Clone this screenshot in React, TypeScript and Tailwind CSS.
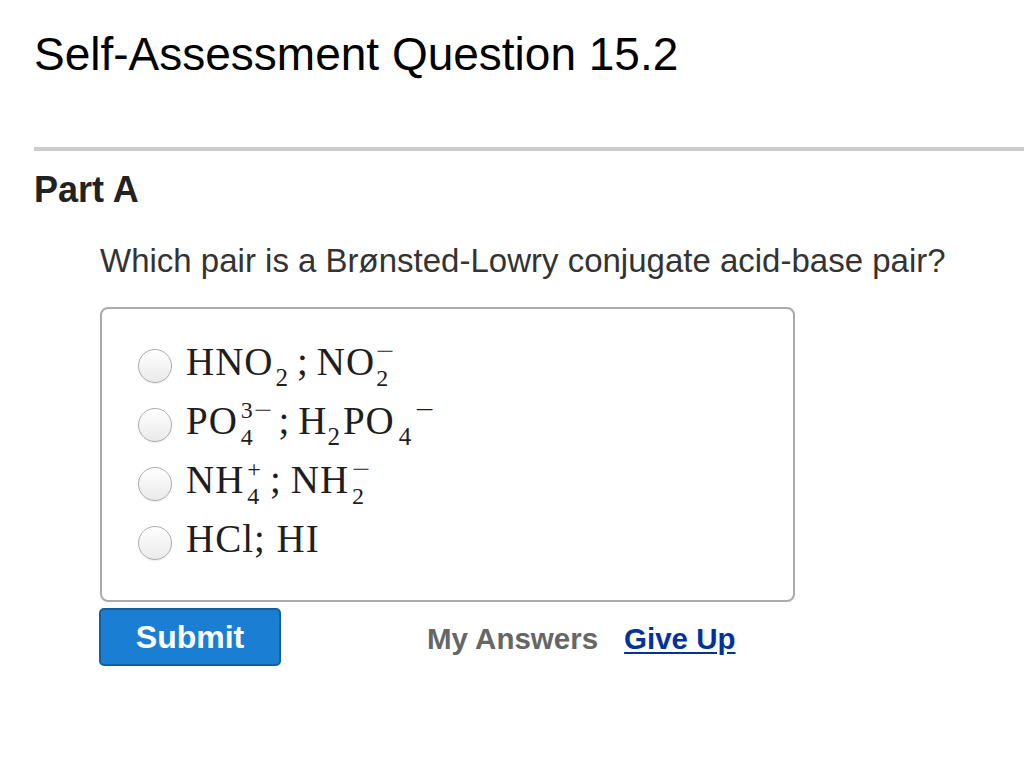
import React from "react";

const Sub = ({ children, className = "" }: { children: React.ReactNode; className?: string }) => (
  <span className={"relative top-[11px] text-[25px] leading-none " + className}>{children}</span>
);

const Sup = ({ children, className = "" }: { children: React.ReactNode; className?: string }) => (
  <span className={"relative -top-[16px] text-[25px] leading-none " + className}>{children}</span>
);

const Minus = () => <span className="inline-block origin-left scale-x-[1.35] mr-[4px]">−</span>;

const Stack = ({ sup, sub, className = "" }: { sup: React.ReactNode; sub: React.ReactNode; className?: string }) => (
  <span className={"relative -top-[16px] inline-flex flex-col items-start text-[24px] leading-[27px] " + className}>
    <span>{sup}</span>
    <span>{sub}</span>
  </span>
);

const Radio = () => (
  <span className="w-[34px] h-[34px] shrink-0 rounded-full border border-[#adadad] bg-linear-to-b from-white to-[#eaeaea] shadow-[0_1px_1px_rgba(0,0,0,0.08)]" />
);

const Row = ({ children }: { children: React.ReactNode }) => (
  <div className="flex items-center h-[59px]">
    <Radio />
    <div
      className="ml-[14px] mb-[8px] h-[38px] text-[39px] leading-[38px] tracking-[1px] text-[#1e1e1e] whitespace-nowrap"
      style={{ fontFamily: '"Liberation Serif", "Times New Roman", serif' }}
    >
      {children}
    </div>
  </div>
);

export default function App() {
  return (
    <div className="w-full min-h-[773px] bg-white" style={{ fontFamily: '"Liberation Sans", Arial, Helvetica, sans-serif' }}>
      <div className="pt-[31px] pl-[34px] text-[46px] leading-[46px] text-black">Self-Assessment Question 15.2</div>
      <div className="mt-[70px] ml-[34px] h-[4px] bg-[#cccccc]" />
      <div className="mt-[21px] pl-[34px] text-[36px] leading-[36px] font-bold text-[#222]">Part A</div>
      <div className="mt-[36px] pl-[100px] text-[33px] leading-[33px] text-[#333]">
        Which pair is a Brønsted-Lowry conjugate acid-base pair?
      </div>
      <div className="mt-[30px] ml-[100px] w-[695px] h-[295px] border-2 border-[#aaaaaa] rounded-[8px] pt-[27px] pl-[36px]">
        <Row>
          HNO<Sub className="ml-[2px]">2</Sub>
          <span className="ml-[8px]">;</span>
          <span className="ml-[8px]">NO</span>
          <Stack sup={<Minus />} sub="2" className="ml-[1px]" />
        </Row>
        <Row>
          PO
          <Stack sup={<>3<Minus /></>} sub="4" className="ml-[3px]" />
          <span className="ml-[6px]">;</span>
          <span className="ml-[8px]">H</span>
          <Sub>2</Sub>
          <span className="ml-[2px]">PO</span>
          <Sub className="ml-[4px]">4</Sub>
          <Sup className="ml-[3px]"><Minus /></Sup>
        </Row>
        <Row>
          NH
          <Stack sup="+" sub="4" className="ml-[3px]" />
          <span className="ml-[8px]">;</span>
          <span className="ml-[9px]">NH</span>
          <Stack sup={<Minus />} sub="2" className="ml-[3px]" />
        </Row>
        <Row>HCl; HI</Row>
      </div>
      <div className="mt-[6px] ml-[99px] flex items-center">
        <button className="w-[182px] h-[58px] rounded-[5px] bg-[#1a7fd2] border-2 border-[#11609f] text-white font-bold text-[32px] leading-none">
          Submit
        </button>
        <span className="ml-[146px] mt-[4px] text-[29.5px] font-bold text-[#666666]">My Answers</span>
        <a href="#" className="ml-[26px] mt-[4px] text-[29.5px] font-bold text-[#003399] underline underline-offset-[3px]">
          Give Up
        </a>
      </div>
    </div>
  );
}
